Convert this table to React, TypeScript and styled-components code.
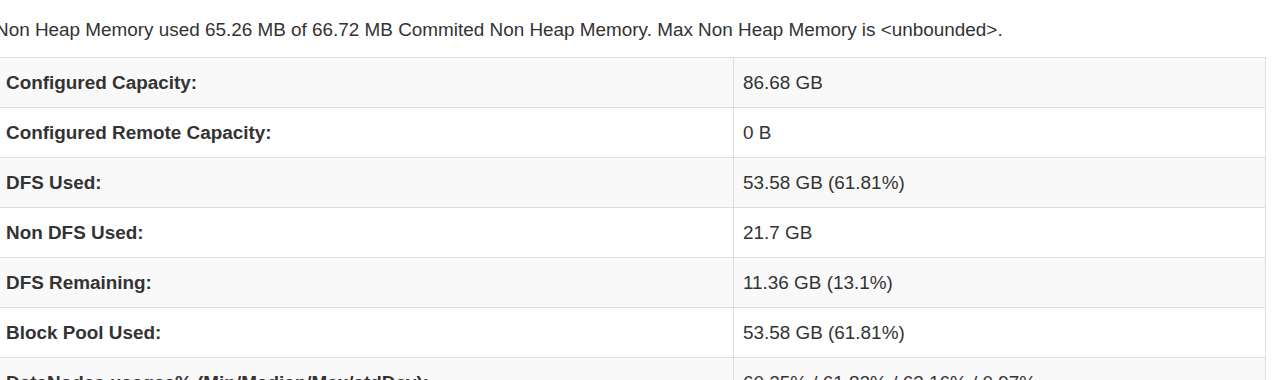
import React from "react";
import styled, { createGlobalStyle } from "styled-components";

const Global = createGlobalStyle`
  html, body { margin: 0; padding: 0; background: #fff; }
  body {
    font-family: "Liberation Sans", Arial, Helvetica, sans-serif;
    font-size: 18.9px;
    color: #333;
    overflow: hidden;
  }
`;

const Page = styled.div`
  margin-left: -5px;
  width: 1271px;
`;

const Summary = styled.p`
  margin: 16px 0 14px;
  line-height: 27px;
`;

const Table = styled.table`
  width: 100%;
  border-collapse: collapse;
  border-spacing: 0;
  border: 1px solid #ddd;
  table-layout: fixed;
`;

const Row = styled.tr<{ $striped: boolean }>`
  background: ${(p) => (p.$striped ? "#f9f9f9" : "#fff")};
`;

const Label = styled.th`
  width: 717px;
  text-align: left;
  font-weight: bold;
  padding: 11px 10px;
  line-height: 27px;
  border: 1px solid #ddd;
  white-space: nowrap;
`;

const Value = styled.td`
  padding: 11px 9px;
  line-height: 27px;
  border: 1px solid #ddd;
  white-space: nowrap;
`;

const rows: [string, string][] = [
  ["Configured Capacity:", "86.68 GB"],
  ["Configured Remote Capacity:", "0 B"],
  ["DFS Used:", "53.58 GB (61.81%)"],
  ["Non DFS Used:", "21.7 GB"],
  ["DFS Remaining:", "11.36 GB (13.1%)"],
  ["Block Pool Used:", "53.58 GB (61.81%)"],
  ["DataNodes usages% (Min/Median/Max/stdDev):", "60.25% / 61.82% / 63.16% / 0.97%"],
];

export default function App() {
  return (
    <>
      <Global />
      <Page>
        <Summary>
          Non Heap Memory used 65.26 MB of 66.72 MB Commited Non Heap Memory. Max Non Heap Memory is
          {" <unbounded>."}
        </Summary>
        <Table>
          <tbody>
            {rows.map(([k, v], i) => (
              <Row key={k} $striped={i % 2 === 0}>
                <Label>{k}</Label>
                <Value>{v}</Value>
              </Row>
            ))}
          </tbody>
        </Table>
      </Page>
    </>
  );
}
